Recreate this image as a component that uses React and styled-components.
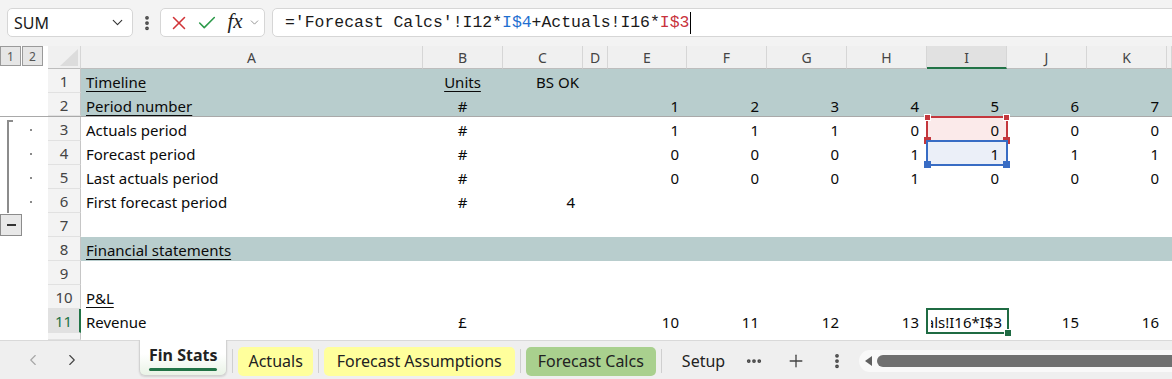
import React from 'react';
import styled, { createGlobalStyle } from 'styled-components';
import { ChevronDown, ChevronLeft, ChevronRight, X, Check, EllipsisVertical, Ellipsis, Plus } from 'lucide-react';

const GlobalStyle = createGlobalStyle`
  html, body { margin: 0; padding: 0; background: #ffffff; }
  body { font-family: "Noto Sans", "Open Sans", sans-serif; color: #111; }
  * { box-sizing: border-box; }
`;

const COLS = '48px 33px 342px 80px 80px 25px 79px 80px 80px 80px 80px 80px 80px 5px';
const TEAL = '#b8cdcd';

const Frame = styled.div`
  width: 1172px;
  height: 379px;
  overflow: hidden;
  display: flex;
  flex-direction: column;
  background: #fff;
`;

/* ---------- formula bar ---------- */
const TopBar = styled.div`
  height: 46px;
  flex: none;
  padding: 8px 0 9px 7px;
  background: #f3f3f3;
  display: flex;
  align-items: stretch;
`;

const Box = styled.div`
  background: #fff;
  border: 1px solid #d6d6d6;
  border-radius: 5px;
  display: flex;
  align-items: center;
`;

const NameBox = styled(Box)`
  width: 126px;
  padding: 0 6px 0 6px;
  justify-content: space-between;
  font-size: 16px;
  color: #1a1a1a;
`;

const DotsSlot = styled.div`
  width: 27px;
  display: flex;
  align-items: center;
  justify-content: center;
  color: #444;
`;

const FnBox = styled(Box)`
  width: 105px;
  padding: 0 0 0 6px;
`;

const IconSlot = styled.span`
  width: ${p => p.$w || 30}px;
  display: flex;
  align-items: center;
  justify-content: center;
  color: ${p => p.$color || '#444'};
`;

const Fx = styled.span`
  font-family: "Liberation Serif", "DejaVu Serif", serif;
  font-style: italic;
  font-size: 21px;
  color: #222;
  line-height: 1;
  margin-top: -3px;
`;

const FormulaBox = styled(Box)`
  flex: 1;
  margin-left: 7px;
  margin-right: -6px;
  border-radius: 5px 0 0 5px;
  padding-left: 12px;
  font-family: "Liberation Mono", "DejaVu Sans Mono", monospace;
  font-size: 16.45px;
  color: #1a1a1a;
  white-space: pre;
`;

const Ref = styled.span`
  color: ${p => p.$c};
`;

const Caret = styled.span`
  display: inline-block;
  width: 1px;
  height: 22px;
  background: #000;
  margin-left: 1px;
  vertical-align: middle;
`;

/* ---------- sheet ---------- */
const Sheet = styled.div`
  flex: none;
  height: 294px;
  overflow: hidden;
  display: flex;
  flex-direction: column;
`;

const Row = styled.div`
  display: grid;
  grid-template-columns: ${COLS};
  height: ${p => p.$h || 24}px;
  flex: none;
  border-bottom: ${p => (p.$freeze ? '1px solid #a9a9a9' : 'none')};
`;

const HeaderRow = styled(Row)`
  height: 23px;
  background: #f3f3f3;
`;

const LevelBox = styled.div`
  display: flex;
  gap: 1px;
  align-items: flex-start;
  background: #fff;
`;

const LevelBtn = styled.div`
  width: 21px;
  height: 20px;
  background: #e6e6e6;
  border: 1px solid #9a9a9a;
  font-size: 12px;
  color: #555;
  display: flex;
  align-items: center;
  justify-content: center;
`;

const Corner = styled.div`
  background: #f0f0f0;
  border-bottom: 1px solid #bdbdbd;
  border-right: 1px solid #d6d6d6;
  position: relative;
  overflow: hidden;
`;

const CornerTriangle = styled.svg`
  position: absolute;
  right: 2px;
  bottom: 2px;
`;

const ColHead = styled.div`
  background: ${p => (p.$active ? '#e1e1e1' : '#f0f0f0')};
  border-right: 1px solid #d6d6d6;
  border-bottom: ${p => (p.$active ? '2px solid #217346' : '1px solid #bdbdbd')};
  font-size: 14px;
  color: #444;
  display: flex;
  align-items: center;
  justify-content: center;
  padding-top: ${p => (p.$active ? 1 : 0)}px;
`;

const Gutter = styled.div`
  position: relative;
  background: #fff;
`;

const BracketLine = styled.div`
  position: absolute;
  left: 7px;
  top: ${p => (p.$start ? 3 : 0)}px;
  bottom: 0;
  width: 6px;
  border-left: 2px solid #8c8c8c;
  border-top: ${p => (p.$start ? '2px solid #8c8c8c' : 'none')};
`;

const LevelDot = styled.div`
  position: absolute;
  left: 30px;
  top: 12px;
  width: 2px;
  height: 2px;
  background: #8a8a8a;
`;

const MinusBtn = styled.div`
  margin-top: 1px;
  width: 22px;
  height: 22px;
  background: #e8e8e8;
  border: 1px solid #8c8c8c;
  display: flex;
  align-items: center;
  justify-content: center;
`;

const MinusBar = styled.div`
  width: 9px;
  height: 2px;
  background: #333;
`;

const RowNum = styled.div`
  background: ${p => (p.$active ? '#e1e1e1' : '#f3f3f3')};
  border-bottom: 1px solid #e1e1e1;
  border-right: ${p => (p.$active ? '2px solid #217346' : '1px solid #c6c6c6')};
  color: ${p => (p.$active ? '#217346' : '#444')};
  font-size: 15px;
  display: flex;
  align-items: center;
  justify-content: center;
  padding-top: 1px;
`;

const Cell = styled.div`
  position: relative;
  background: ${p => (p.$fill ? TEAL : p.$tint || '#fff')};
  display: flex;
  align-items: center;
  justify-content: ${p => (p.$align === 'right' ? 'flex-end' : p.$align === 'center' ? 'center' : 'flex-start')};
  padding: 2px ${p => (p.$num ? 8 : 4)}px 0 ${p => (p.$align === 'left' ? 5 : 3)}px;
  font-size: 15px;
  color: #0a0a0a;
  white-space: nowrap;
  text-decoration: ${p => (p.$u ? 'underline' : 'none')};
  text-decoration-thickness: 1px;
  text-underline-offset: 3px;
  z-index: ${p => (p.$z ? 2 : 'auto')};
`;

const EditCell = styled(Cell)`
  padding: 2px 5px 0 4px;
  z-index: 3;
`;

const EditText = styled.div`
  flex: 1;
  min-width: 0;
  overflow: hidden;
  display: flex;
  justify-content: flex-end;
  white-space: nowrap;
`;

const RefFrame = styled.div`
  position: absolute;
  inset: -1px;
  border: 2px solid ${p => p.$c};
  pointer-events: none;
`;

const Handle = styled.div`
  position: absolute;
  width: 7px;
  height: 7px;
  background: ${p => p.$c};
  border: 1px solid ${p => (p.$hollow ? '#fff' : p.$c)};
  ${p => (p.$t ? 'top: -4px;' : 'bottom: -4px;')}
  ${p => (p.$l ? 'left: -4px;' : 'right: -4px;')}
`;

const ActiveFrame = styled.div`
  position: absolute;
  inset: -1px -2px -1px -1px;
  border: 2px solid #1f6b43;
  pointer-events: none;
  z-index: 4;
`;

const FillHandle = styled.div`
  position: absolute;
  right: -4px;
  bottom: -4px;
  width: 7px;
  height: 7px;
  background: #1f6b43;
  border-left: 1px solid #fff;
  border-top: 1px solid #fff;
`;

/* ---------- tab bar ---------- */
const TabBar = styled.div`
  flex: 1;
  background: #efefef;
  border-top: 1px solid #d9d9d9;
  display: flex;
  align-items: center;
`;

const Nav = styled.div`
  width: 139px;
  display: flex;
  align-items: center;
  padding-left: 24px;
  gap: 21px;
  flex: none;
`;

const NavBtn = styled.span`
  display: flex;
  color: ${p => (p.$disabled ? '#a6a6a6' : '#444')};
`;

const Tab = styled.div`
  flex: none;
  height: ${p => (p.$active ? 36 : 29)}px;
  align-self: ${p => (p.$active ? 'flex-start' : 'center')};
  margin-top: ${p => (p.$active ? -1 : 2)}px;
  padding: 0 ${p => p.$pad || 11}px;
  display: flex;
  flex-direction: column;
  align-items: center;
  justify-content: center;
  font-size: 16px;
  color: #222;
  border-radius: ${p => (p.$active ? '0 0 6px 6px' : '5px')};
  font-weight: ${p => (p.$active ? 700 : 400)};
  background: ${p =>
    p.$variant === 'active'
      ? 'linear-gradient(#ffffff 40%, #e9f3e6)'
      : p.$variant === 'yellow'
      ? '#ffff9c'
      : p.$variant === 'green'
      ? '#a9d08e'
      : 'transparent'};
  border: ${p => (p.$active ? '1px solid #d2d2d2' : 'none')};
  border-top: none;
  box-shadow: ${p => (p.$active ? '0 1px 2px rgba(0,0,0,0.12)' : 'none')};
`;

const TabUnderline = styled.div`
  width: 100%;
  height: 3px;
  border-radius: 2px;
  background: #217346;
  margin-top: 2px;
`;

const Sep = styled.div`
  width: 1px;
  height: 24px;
  margin-top: 2px;
  background: #cfcfcf;
  margin-left: 5px;
  margin-right: 5px;
  flex: none;
`;

const BarIcon = styled.span`
  display: flex;
  color: #444;
  margin-left: ${p => p.$ml || 0}px;
  margin-top: 2px;
  flex: none;
`;

const ScrollTrack = styled.div`
  flex: none;
  margin-left: 13px;
  margin-top: 2px;
  width: 330px;
  height: 22px;
  background: #f9f9f9;
  border-radius: 11px;
  display: flex;
  align-items: center;
  padding-left: 6px;
  gap: 5px;
`;

const ScrollThumb = styled.div`
  flex: 1;
  height: 12px;
  border-radius: 6px;
  background: #707070;
`;

/* ---------- data ---------- */
const letters = ['A', 'B', 'C', 'D', 'E', 'F', 'G', 'H', 'I', 'J', 'K', ''];

const rows = [
  { n: 1, fill: true, A: { t: 'Timeline', u: true }, B: { t: 'Units', u: true, a: 'center' }, C: { t: 'BS OK', a: 'right' } },
  { n: 2, fill: true, freeze: true, A: { t: 'Period number', u: true }, B: { t: '#', a: 'center' }, nums: [1, 2, 3, 4, 5, 6, 7] },
  { n: 3, bracket: 'start', A: { t: 'Actuals period' }, B: { t: '#', a: 'center' }, nums: [1, 1, 1, 0, 0, 0, 0], ref: 'red' },
  { n: 4, bracket: 'mid', A: { t: 'Forecast period' }, B: { t: '#', a: 'center' }, nums: [0, 0, 0, 1, 1, 1, 1], ref: 'blue' },
  { n: 5, bracket: 'mid', A: { t: 'Last actuals period' }, B: { t: '#', a: 'center' }, nums: [0, 0, 0, 1, 0, 0, 0] },
  { n: 6, bracket: 'mid', A: { t: 'First forecast period' }, B: { t: '#', a: 'center' }, C: { t: '4', a: 'right', num: true } },
  { n: 7, minus: true },
  { n: 8, fill: true, A: { t: 'Financial statements', u: true } },
  { n: 9 },
  { n: 10, A: { t: 'P&L', u: true } },
  { n: 11, active: true, A: { t: 'Revenue' }, B: { t: '£', a: 'center' }, nums: [10, 11, 12, 13, 'edit', 15, 16] },
];

const REFS = {
  red: { c: '#c4373d', tint: '#fbeaea' },
  blue: { c: '#386cc4', tint: '#ebeff8' },
};

function CellFor({ spec, fill }) {
  if (!spec) return <Cell $fill={fill} />;
  return (
    <Cell $fill={fill} $align={spec.a || 'left'} $u={spec.u} $num={spec.num}>
      {spec.t}
    </Cell>
  );
}

function NumCell({ v, fill, refKind }) {
  if (v === 'edit') {
    return (
      <EditCell>
        <EditText>als!I16*I$3</EditText>
        <ActiveFrame>
          <FillHandle />
        </ActiveFrame>
      </EditCell>
    );
  }
  if (refKind) {
    const r = REFS[refKind];
    return (
      <Cell $align="right" $num $tint={r.tint} $z>
        {v}
        <RefFrame $c={r.c}>
          {refKind === 'red' && <Handle $c={r.c} $t $l $hollow />}
          {refKind === 'red' && <Handle $c={r.c} $t $hollow />}
          <Handle $c={r.c} $l />
          <Handle $c={r.c} />
        </RefFrame>
      </Cell>
    );
  }
  return (
    <Cell $fill={fill} $align="right" $num>
      {v}
    </Cell>
  );
}

function SheetRow({ r }) {
  const nums = r.nums || [];
  return (
    <Row $freeze={r.freeze}>
      <Gutter>
        {r.bracket && <BracketLine $start={r.bracket === 'start'} />}
        {r.bracket && <LevelDot />}
        {r.minus && (
          <MinusBtn>
            <MinusBar />
          </MinusBtn>
        )}
      </Gutter>
      <RowNum $active={r.active}>{r.n}</RowNum>
      <CellFor spec={r.A} fill={r.fill} />
      <CellFor spec={r.B} fill={r.fill} />
      <CellFor spec={r.C} fill={r.fill} />
      <Cell $fill={r.fill} />
      {[0, 1, 2, 3, 4, 5, 6].map(i =>
        nums[i] !== undefined ? (
          <NumCell key={i} v={nums[i]} fill={r.fill} refKind={i === 4 ? r.ref : undefined} />
        ) : (
          <Cell key={i} $fill={r.fill} />
        )
      )}
      <Cell $fill={r.fill} />
    </Row>
  );
}

export default function App() {
  return (
    <Frame>
      <GlobalStyle />
      <TopBar>
        <NameBox>
          <span>SUM</span>
          <ChevronDown size={17} strokeWidth={1.6} color="#333" />
        </NameBox>
        <DotsSlot>
          <EllipsisVertical size={18} strokeWidth={3} />
        </DotsSlot>
        <FnBox>
          <IconSlot $w={24} $color="#d13438">
            <X size={22} strokeWidth={1.7} />
          </IconSlot>
          <IconSlot $w={32} $color="#2c9a4a">
            <Check size={22} strokeWidth={1.7} />
          </IconSlot>
          <IconSlot $w={24}>
            <Fx>fx</Fx>
          </IconSlot>
          <IconSlot $w={14} $color="#888">
            <ChevronDown size={13} strokeWidth={1.6} />
          </IconSlot>
        </FnBox>
        <FormulaBox>
          <span>
            ='Forecast Calcs'!I12*<Ref $c="#1f6fd0">I$4</Ref>+Actuals!I16*<Ref $c="#c8323c">I$3</Ref>
          </span>
          <Caret />
        </FormulaBox>
      </TopBar>

      <Sheet>
        <HeaderRow>
          <LevelBox>
            <LevelBtn>1</LevelBtn>
            <LevelBtn>2</LevelBtn>
          </LevelBox>
          <Corner>
            <CornerTriangle width="18" height="17" viewBox="0 0 18 17">
              <polygon points="18,0 18,17 0,17" fill="#dcdcdc" />
            </CornerTriangle>
          </Corner>
          {letters.map((l, i) => (
            <ColHead key={i} $active={l === 'I'}>
              {l}
            </ColHead>
          ))}
        </HeaderRow>
        {rows.map(r => (
          <SheetRow key={r.n} r={r} />
        ))}
        <Row $h={7}>
          <Gutter />
          <RowNum />
          {letters.map((l, i) => (
            <Cell key={i} />
          ))}
        </Row>
      </Sheet>

      <TabBar>
        <Nav>
          <NavBtn $disabled>
            <ChevronLeft size={18} strokeWidth={1.5} />
          </NavBtn>
          <NavBtn>
            <ChevronRight size={18} strokeWidth={1.5} />
          </NavBtn>
        </Nav>
        <Tab $active $variant="active" $pad={9}>
          <span>Fin Stats</span>
          <TabUnderline />
        </Tab>
        <Sep />
        <Tab $variant="yellow" $pad={10}>Actuals</Tab>
        <Sep />
        <Tab $variant="yellow" $pad={13}>Forecast Assumptions</Tab>
        <Sep />
        <Tab $variant="green" $pad={12}>Forecast Calcs</Tab>
        <Sep />
        <Tab $pad={15}>Setup</Tab>
        <BarIcon $ml={5}>
          <Ellipsis size={18} strokeWidth={3} />
        </BarIcon>
        <BarIcon $ml={23}>
          <Plus size={20} strokeWidth={1.6} />
        </BarIcon>
        <BarIcon $ml={22}>
          <EllipsisVertical size={18} strokeWidth={3} />
        </BarIcon>
        <ScrollTrack>
          <svg width="7" height="10" viewBox="0 0 7 10">
            <polygon points="7,0 7,10 0,5" fill="#606060" />
          </svg>
          <ScrollThumb />
        </ScrollTrack>
      </TabBar>
    </Frame>
  );
}
